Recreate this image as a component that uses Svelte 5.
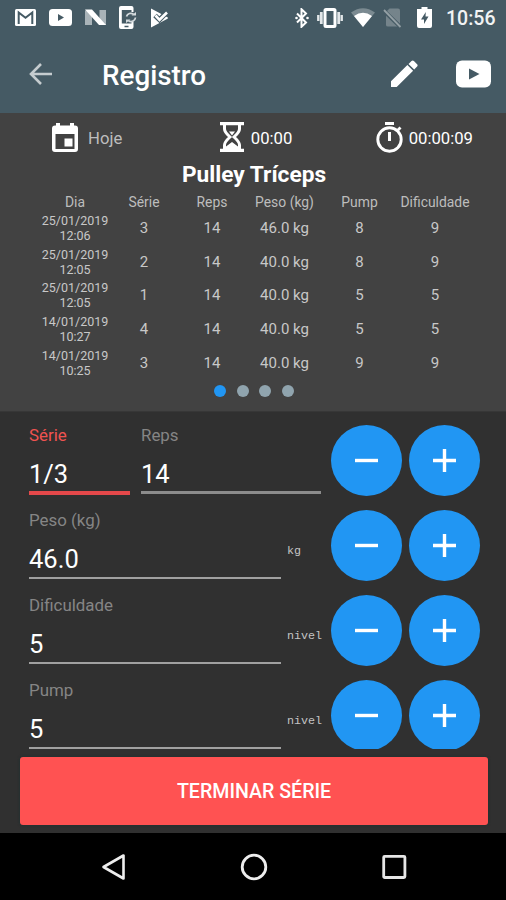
<script>
  const history = [
    { day: '25/01/2019', time: '12:06', set: 3, reps: 14, weight: '46.0 kg', pump: 8, difficulty: 9 },
    { day: '25/01/2019', time: '12:05', set: 2, reps: 14, weight: '40.0 kg', pump: 8, difficulty: 9 },
    { day: '25/01/2019', time: '12:05', set: 1, reps: 14, weight: '40.0 kg', pump: 5, difficulty: 5 },
    { day: '14/01/2019', time: '10:27', set: 4, reps: 14, weight: '40.0 kg', pump: 5, difficulty: 5 },
    { day: '14/01/2019', time: '10:25', set: 3, reps: 14, weight: '40.0 kg', pump: 9, difficulty: 9 }
  ];
  const columns = ['Dia', 'Série', 'Reps', 'Peso (kg)', 'Pump', 'Dificuldade'];
  const rows = [
    { fields: [{ label: 'Série', value: '1/3', kind: 'active' }, { label: 'Reps', value: '14', kind: 'reps' }] },
    { fields: [{ label: 'Peso (kg)', value: '46.0', kind: 'wide' }], unit: 'kg' },
    { fields: [{ label: 'Dificuldade', value: '5', kind: 'wide' }], unit: 'nivel' },
    { fields: [{ label: 'Pump', value: '5', kind: 'wide' }], unit: 'nivel' }
  ];
</script>

<div class="screen">
  <header>
    <div class="status">
      <div class="notices">
        <svg width="21" height="17" viewBox="0 0 21 17"><rect width="21" height="17" rx="1.5" fill="#fff"/><path d="M3.7 15V3.5l6.8 5.3 6.8-5.3V15" fill="none" stroke="#455a64" stroke-width="2"/></svg>
        <svg width="23" height="17" viewBox="0 0 23 17"><rect width="23" height="17" rx="3.5" fill="#fff"/><path d="M9 5l6 3.5L9 12z" fill="#455a64"/></svg>
        <svg width="21" height="17" viewBox="0 0 21 17"><path d="M0 1.500h7V16H0zM14.500 1H21v15h-6.500z" fill="#a9b3b8"/><path d="M0 .5h7l14 15.500h-7z" fill="#fff"/></svg>
        <svg width="18" height="23" viewBox="0 0 18 23"><path d="M2 0h10.500q2 0 2 2v4h-2V4H2.800v13.500h9.700V16h2v5q0 2-2 2H2q-2 0-2-2V2Q0 0 2 0zM5.500 19.800v1.500h4v-1.500z" fill="#fff" fill-rule="evenodd"/><path d="M7.500 10.500a4.500 4.500 0 0 1 7-2.300M16.500 11.500a4.500 4.500 0 0 1-7 3.300" fill="none" stroke="#d4dadd" stroke-width="1.700"/><path d="M12.500 9.500h4.500V6zM11.500 13.500H7V17z" fill="#d4dadd"/></svg>
        <svg width="20" height="20" viewBox="0 0 20 20"><path d="M1 .5 17 9q2 1 0 2L1 19.500z" fill="#fff"/><path d="M5 7.500l4.500 4.300L18 3" fill="none" stroke="#455a64" stroke-width="5"/><path d="M5.500 7.500l4 4.300L17 4.500" fill="none" stroke="#fff" stroke-width="2.600"/></svg>
      </div>
      <div class="signals">
        <svg width="14" height="20" viewBox="0 0 14 20"><path d="M2 5.500l9 9-4.500 4.300V1.200L11 5.500l-9 9" fill="none" stroke="#fff" stroke-width="2"/><circle cx="1.500" cy="10" r="1.300" fill="#fff"/><circle cx="12.500" cy="10" r="1.300" fill="#fff"/></svg>
        <svg class="vibrate" width="26" height="20" viewBox="0 0 26 20"><rect x="8" y="1.500" width="10" height="17" rx="1" fill="none" stroke="#fff" stroke-width="3"/><path d="M4.300 4v12M21.700 4v12" stroke="#e3e7e9" stroke-width="2.800"/><path d="M1.300 7v6M24.700 7v6" stroke="#e3e7e9" stroke-width="2.400"/></svg>
        <svg class="wifi" width="24" height="19" viewBox="0 0 24 19"><path d="M0 4.500Q12-4 24 4.500L12 19z" fill="#7b8a91"/><path d="M3 8Q12 1.500 21 8L12 19z" fill="#fff"/></svg>
        <svg class="sim" width="19" height="20" viewBox="0 0 19 20"><path d="M6.500.5H15q2 0 2 2v16H5Q3 18.500 3 17V4z" fill="#75848b"/><path d="M-.5 1.500l18 17.500" stroke="#455a64" stroke-width="4"/><path d="M1 2l16.500 17" stroke="#94a0a5" stroke-width="1.800"/></svg>
        <svg class="battery" width="15" height="21" viewBox="0 0 15 21"><path d="M4.500 0h6v2H15v17q0 2-2 2H2q-2 0-2-2V2h4.500z" fill="#fff"/><path d="M8.800 5 4 12.500h3V17l4.500-7.500h-3z" fill="#455a64"/></svg>
        <span class="clock">10:56</span>
      </div>
    </div>
    <div class="toolbar">
      <svg width="23" height="22" viewBox="0 0 23 22"><path d="M23 11H2M12 1 2 11l10 10" fill="none" stroke="#c5cccf" stroke-width="2.600"/></svg>
      <h1>Registro</h1>
      <svg class="pencil" width="28" height="28" viewBox="0 0 28 28"><path d="M1 21.300 17.400 5l5.700 5.700L6.700 27H1zM18.500 3.900l3-2.900q1.200-1 2.400 0l3.200 3.200q1 1.200 0 2.400l-2.900 3z" fill="#fff"/></svg>
      <svg class="video" width="35" height="28" viewBox="0 0 35 28"><rect y=".5" width="35" height="27" rx="6" fill="#fff"/><path d="M13 8.500 23.500 14 13 19.500z" fill="#455a64"/></svg>
    </div>
  </header>

  <section class="summary">
    <div class="timers">
      <div class="timer today">
        <svg width="28" height="31" viewBox="0 0 28 31"><path d="M5 1h4v2.500h10V1h4v2.500h1q3 0 3 3V27q0 3-3 3H4q-3 0-3-3V6.500q0-3 3-3h1zM4.500 12v15h19V12z" fill="#fff" fill-rule="evenodd"/><rect x="13.500" y="16.500" width="8" height="8" fill="#fff"/></svg>
        <span>Hoje</span>
      </div>
      <div class="timer rest">
        <svg width="24" height="30" viewBox="0 0 24 30"><path d="M0 0h24v3.200H0zM0 26.800h24V30H0z" fill="#fff"/><path d="M4.500 2v5q0 3 5.500 8-5.500 5-5.500 8v5M19.500 2v5q0 3-5.500 8 5.500 5 5.500 8v5" fill="none" stroke="#fff" stroke-width="3"/><path d="M9 9.500h6l-3 4zM6 27v-2.500l6-4.500 6 4.500V27z" fill="#fff"/></svg>
        <span>00:00</span>
      </div>
      <div class="timer total">
        <svg width="27" height="31" viewBox="0 0 27 31"><path d="M9 0h9v3H9z" fill="#fff"/><circle cx="13.500" cy="17.500" r="11.700" fill="none" stroke="#fff" stroke-width="2.900"/><path d="M13.500 10v9" stroke="#fff" stroke-width="3"/><path d="M21 9l3.500-3.500" stroke="#fff" stroke-width="2.800"/></svg>
        <span>00:00:09</span>
      </div>
    </div>
    <h2>Pulley Tríceps</h2>
    <div class="table">
      <div class="row head">{#each columns as c}<span>{c}</span>{/each}</div>
      {#each history as h}
        <div class="row">
          <span class="date">{h.day}<br />{h.time}</span>
          <span>{h.set}</span><span>{h.reps}</span><span>{h.weight}</span><span>{h.pump}</span><span>{h.difficulty}</span>
        </div>
      {/each}
    </div>
    <div class="dots"><i class="on"></i><i></i><i></i><i></i></div>
  </section>

  <section class="form">
    <div class="inputs">
      {#each rows as r}
        <div class="entry">
          {#each r.fields as f}
            <div class="field {f.kind}"><label>{f.label}<output>{f.value}</output></label></div>
          {/each}
          {#if r.unit}<span class="unit">{r.unit}</span>{/if}
          <div class="steps">
            <button aria-label="menos"><svg width="23" height="23" viewBox="0 0 23 23"><path d="M0 11.500h23" stroke="#fff" stroke-width="3.400"/></svg></button>
            <button aria-label="mais"><svg width="23" height="23" viewBox="0 0 23 23"><path d="M0 11.500h23M11.500 0v23" stroke="#fff" stroke-width="3.400"/></svg></button>
          </div>
        </div>
      {/each}
    </div>
    <button class="finish">TERMINAR SÉRIE</button>
  </section>

  <nav>
    <svg width="26" height="28" viewBox="0 0 26 28"><path d="M2.500 14 22.500 2.500v23z" fill="none" stroke="#eee" stroke-width="2.600" stroke-linejoin="round"/></svg>
    <svg width="28" height="28" viewBox="0 0 28 28"><circle cx="14" cy="14" r="11.800" fill="none" stroke="#eee" stroke-width="2.800"/></svg>
    <svg width="26" height="28" viewBox="0 0 26 28"><rect x="2.700" y="3.300" width="21.200" height="21.200" rx="1" fill="none" stroke="#e6e6e6" stroke-width="2.800"/></svg>
  </nav>
</div>

<style>
  :global(body) { margin: 0; background: #000; }
  .screen { width: 506px; height: 900px; display: flex; flex-direction: column; overflow: hidden; font-family: Roboto, sans-serif; color: #fff; }
  svg { display: block; flex: none; }
  header { height: 113px; background: #455a64; flex: none; }
  .status { height: 35px; display: flex; justify-content: space-between; box-sizing: border-box; padding: 0 11px 0 15px; }
  .notices, .signals { display: flex; align-items: center; }
  .notices { gap: 13px; }
  .vibrate { margin-left: 8px; }
  .wifi { margin-left: 8px; }
  .sim { margin-left: 8px; }
  .battery { margin-left: 15px; }
  .clock { width: 49px; margin-left: 14px; padding-top: 2px; font-size: 19.500px; font-weight: 500; line-height: 24px; color: #f1f3f4; }
  .toolbar { height: 78px; display: flex; align-items: center; padding-left: 29px; }
  .toolbar svg { margin-top: -1px; }
  h1 { margin: 3px 0 0 50px; width: 288px; font-size: 27.800px; line-height: 32px; font-weight: 500; }
  .video { margin-left: 38px; }
  .summary { height: 298px; background: #424242; flex: none; }
  .timers { height: 49px; display: flex; align-items: center; box-sizing: border-box; padding: 0 33px 0 51px; justify-content: space-between; }
  .timer { display: flex; align-items: center; font-size: 16.700px; line-height: 20px; }
  .timer svg { margin-top: -1px; }
  .timer span { padding-top: 2px; }
  .today { width: 169px; gap: 9px; color: #bdbdbd; }
  .rest { width: 156px; gap: 7px; }
  .total { gap: 6px; }
  h2 { margin: 0; height: 28px; font-size: 22.700px; line-height: 25px; font-weight: 700; text-align: center; padding-left: 2px; }
  .table { padding-left: 40px; }
  .row { display: grid; grid-template-columns: 70px 68px 68px 77px 73px 78px; align-items: center; justify-items: center; height: 33.700px; font-size: 15px; color: #c8c8c8; }
  .head { height: 21px; padding-top: 2px; box-sizing: border-box; font-size: 13.900px; color: #bdbdbd; }
  .date { font-size: 12.500px; line-height: 15px; text-align: center; }
  .dots { display: flex; gap: 10.500px; padding: 6px 0 0 214px; }
  .dots i { width: 12px; height: 12px; border-radius: 50%; background: #90a4ae; }
  .dots .on { background: #2196f3; }
  .form { height: 422px; box-sizing: border-box; background: #303030; border-top: 1px solid #373737; flex: none; }
  .inputs { height: 337px; overflow: hidden; box-sizing: border-box; padding: 6px 26px 0 29px; }
  .entry { height: 85px; display: flex; }
  .field { flex: none; width: 252px; height: 78px; }
  .field label { display: flex; flex-direction: column; height: 76px; box-sizing: border-box; padding-top: 7px; font-size: 16.900px; line-height: 20px; color: #858585; border-bottom: 2px solid #a0a0a0; }
  output { margin-top: 14px; font-size: 25.500px; line-height: 30px; color: #fff; }
  .active { width: 101px; margin-right: 11px; }
  .active label { color: #ef5350; border-bottom: 4px solid #e5484a; height: 77px; }
  .reps { width: 180px; }
  .reps label { border-bottom: 3px solid #8c8c8c; }
  .unit { margin: 40px 0 0 6px; width: 35px; font: 11.700px/16px "Liberation Mono", monospace; color: #c4c4c4; }
  .steps { display: flex; gap: 7px; margin-left: auto; padding-top: 7px; }
  .steps button { width: 71px; height: 71px; padding: 0; border: 0; border-radius: 50%; background: #2196f3; display: flex; align-items: center; justify-content: center; }
  .finish { display: block; width: 468px; height: 68px; margin: 8px 0 0 20px; padding: 2px 0 0; border: 0; border-radius: 3px; background: #ff5252; color: #fff; font: 500 19.600px/24px Roboto, sans-serif; box-shadow: 0 0 3px #173030; }
  nav { flex: 1; display: flex; justify-content: space-between; align-items: center; background: #000; padding: 0 99px 0 101px; }
</style>
